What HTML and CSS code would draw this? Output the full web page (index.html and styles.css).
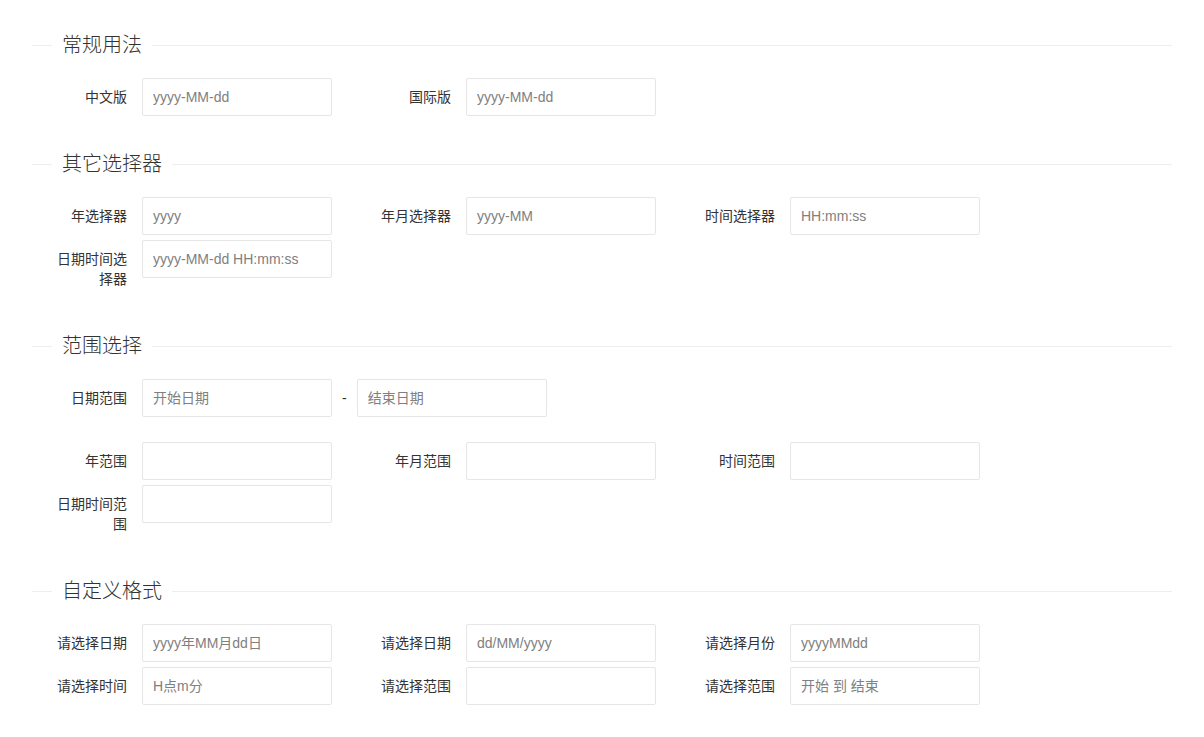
FILE: index.html
```html
<html>
  <head>
    <meta name="viewport" content="width=device-width, initial-scale=1">
    <meta charset="UTF-8">
    <link rel="stylesheet" href="styles.css">
  </head>
  <body>
    <div class="field-title"><span>常规用法</span></div>
    <div class="form-row">
      <div class="inline">
        <label class="form-label">中文版</label>
        <input class="form-input" type="text" placeholder="yyyy-MM-dd">
      </div>
      <div class="inline">
        <label class="form-label">国际版</label>
        <input class="form-input" type="text" placeholder="yyyy-MM-dd">
      </div>
    </div>

    <div class="field-title"><span>其它选择器</span></div>
    <div class="form-row">
      <div class="inline">
        <label class="form-label">年选择器</label>
        <input class="form-input" type="text" placeholder="yyyy">
      </div>
      <div class="inline">
        <label class="form-label">年月选择器</label>
        <input class="form-input" type="text" placeholder="yyyy-MM">
      </div>
      <div class="inline">
        <label class="form-label">时间选择器</label>
        <input class="form-input" type="text" placeholder="HH:mm:ss">
      </div>
      <div class="inline">
        <label class="form-label">日期时间选择器</label>
        <input class="form-input" type="text" placeholder="yyyy-MM-dd HH:mm:ss">
      </div>
    </div>

    <div class="field-title"><span>范围选择</span></div>
    <div class="form-row range-row">
      <div class="inline">
        <label class="form-label">日期范围</label>
        <input class="form-input" type="text" placeholder="开始日期">
        <div class="form-mid">-</div>
        <input class="form-input" type="text" placeholder="结束日期">
      </div>
    </div>
    <div class="form-row">
      <div class="inline">
        <label class="form-label">年范围</label>
        <input class="form-input" type="text">
      </div>
      <div class="inline">
        <label class="form-label">年月范围</label>
        <input class="form-input" type="text">
      </div>
      <div class="inline">
        <label class="form-label">时间范围</label>
        <input class="form-input" type="text">
      </div>
      <div class="inline">
        <label class="form-label">日期时间范围</label>
        <input class="form-input" type="text">
      </div>
    </div>

    <div class="field-title"><span>自定义格式</span></div>
    <div class="form-row">
      <div class="inline">
        <label class="form-label">请选择日期</label>
        <input class="form-input" type="text" placeholder="yyyy年MM月dd日">
      </div>
      <div class="inline">
        <label class="form-label">请选择日期</label>
        <input class="form-input" type="text" placeholder="dd/MM/yyyy">
      </div>
      <div class="inline">
        <label class="form-label">请选择月份</label>
        <input class="form-input" type="text" placeholder="yyyyMMdd">
      </div>
      <div class="inline">
        <label class="form-label">请选择时间</label>
        <input class="form-input" type="text" placeholder="H点m分">
      </div>
      <div class="inline">
        <label class="form-label">请选择范围</label>
        <input class="form-input" type="text">
      </div>
      <div class="inline">
        <label class="form-label">请选择范围</label>
        <input class="form-input" type="text" placeholder="开始 到 结束">
      </div>
    </div>
  </body>
</html>
```

FILE: styles.css
```css
:root {
  --text: #333;
  --line: #eee;
  --border: #e6e6e6;
  --placeholder: #808080;
}
body {
  margin: 0;
  padding: 31px 32px 0;
  font-family: "Liberation Sans", "Noto Sans CJK SC", sans-serif;
  font-size: 14px;
  color: var(--text);
  background: #fff;
}
.field-title {
  display: flex;
  height: 29px;
  margin: 34px 0 18px;
}
.field-title:first-child {
  margin-top: 0;
}
.field-title::before,
.field-title::after {
  content: "";
  height: 1px;
  margin-top: 14px;
  background: var(--line);
}
.field-title::before {
  width: 20px;
}
.field-title::after {
  flex: 1;
}
.field-title span {
  padding: 0 10px;
  font-size: 20px;
  font-weight: 300;
  line-height: 29px;
}
.form-row {
  display: flex;
  flex-wrap: wrap;
  column-gap: 14px;
  row-gap: 5px;
  margin-bottom: 20px;
}
.form-row.range-row {
  margin-bottom: 25px;
}
.inline {
  display: flex;
  align-items: flex-start;
}
.form-label {
  width: 80px;
  padding: 9px 15px;
  line-height: 20px;
  text-align: right;
  cursor: pointer;
}
.form-input {
  box-sizing: border-box;
  width: 190px;
  height: 38px;
  margin: 0 10px 0 0;
  padding: 0 10px;
  border: 1px solid var(--border);
  border-radius: 2px;
  font-family: inherit;
  font-size: 14px;
  color: var(--text);
  outline: none;
  background: #fff;
}
.form-input::placeholder {
  color: var(--placeholder);
}
.form-mid {
  padding: 9px 0;
  margin-right: 10px;
  line-height: 20px;
}
```
